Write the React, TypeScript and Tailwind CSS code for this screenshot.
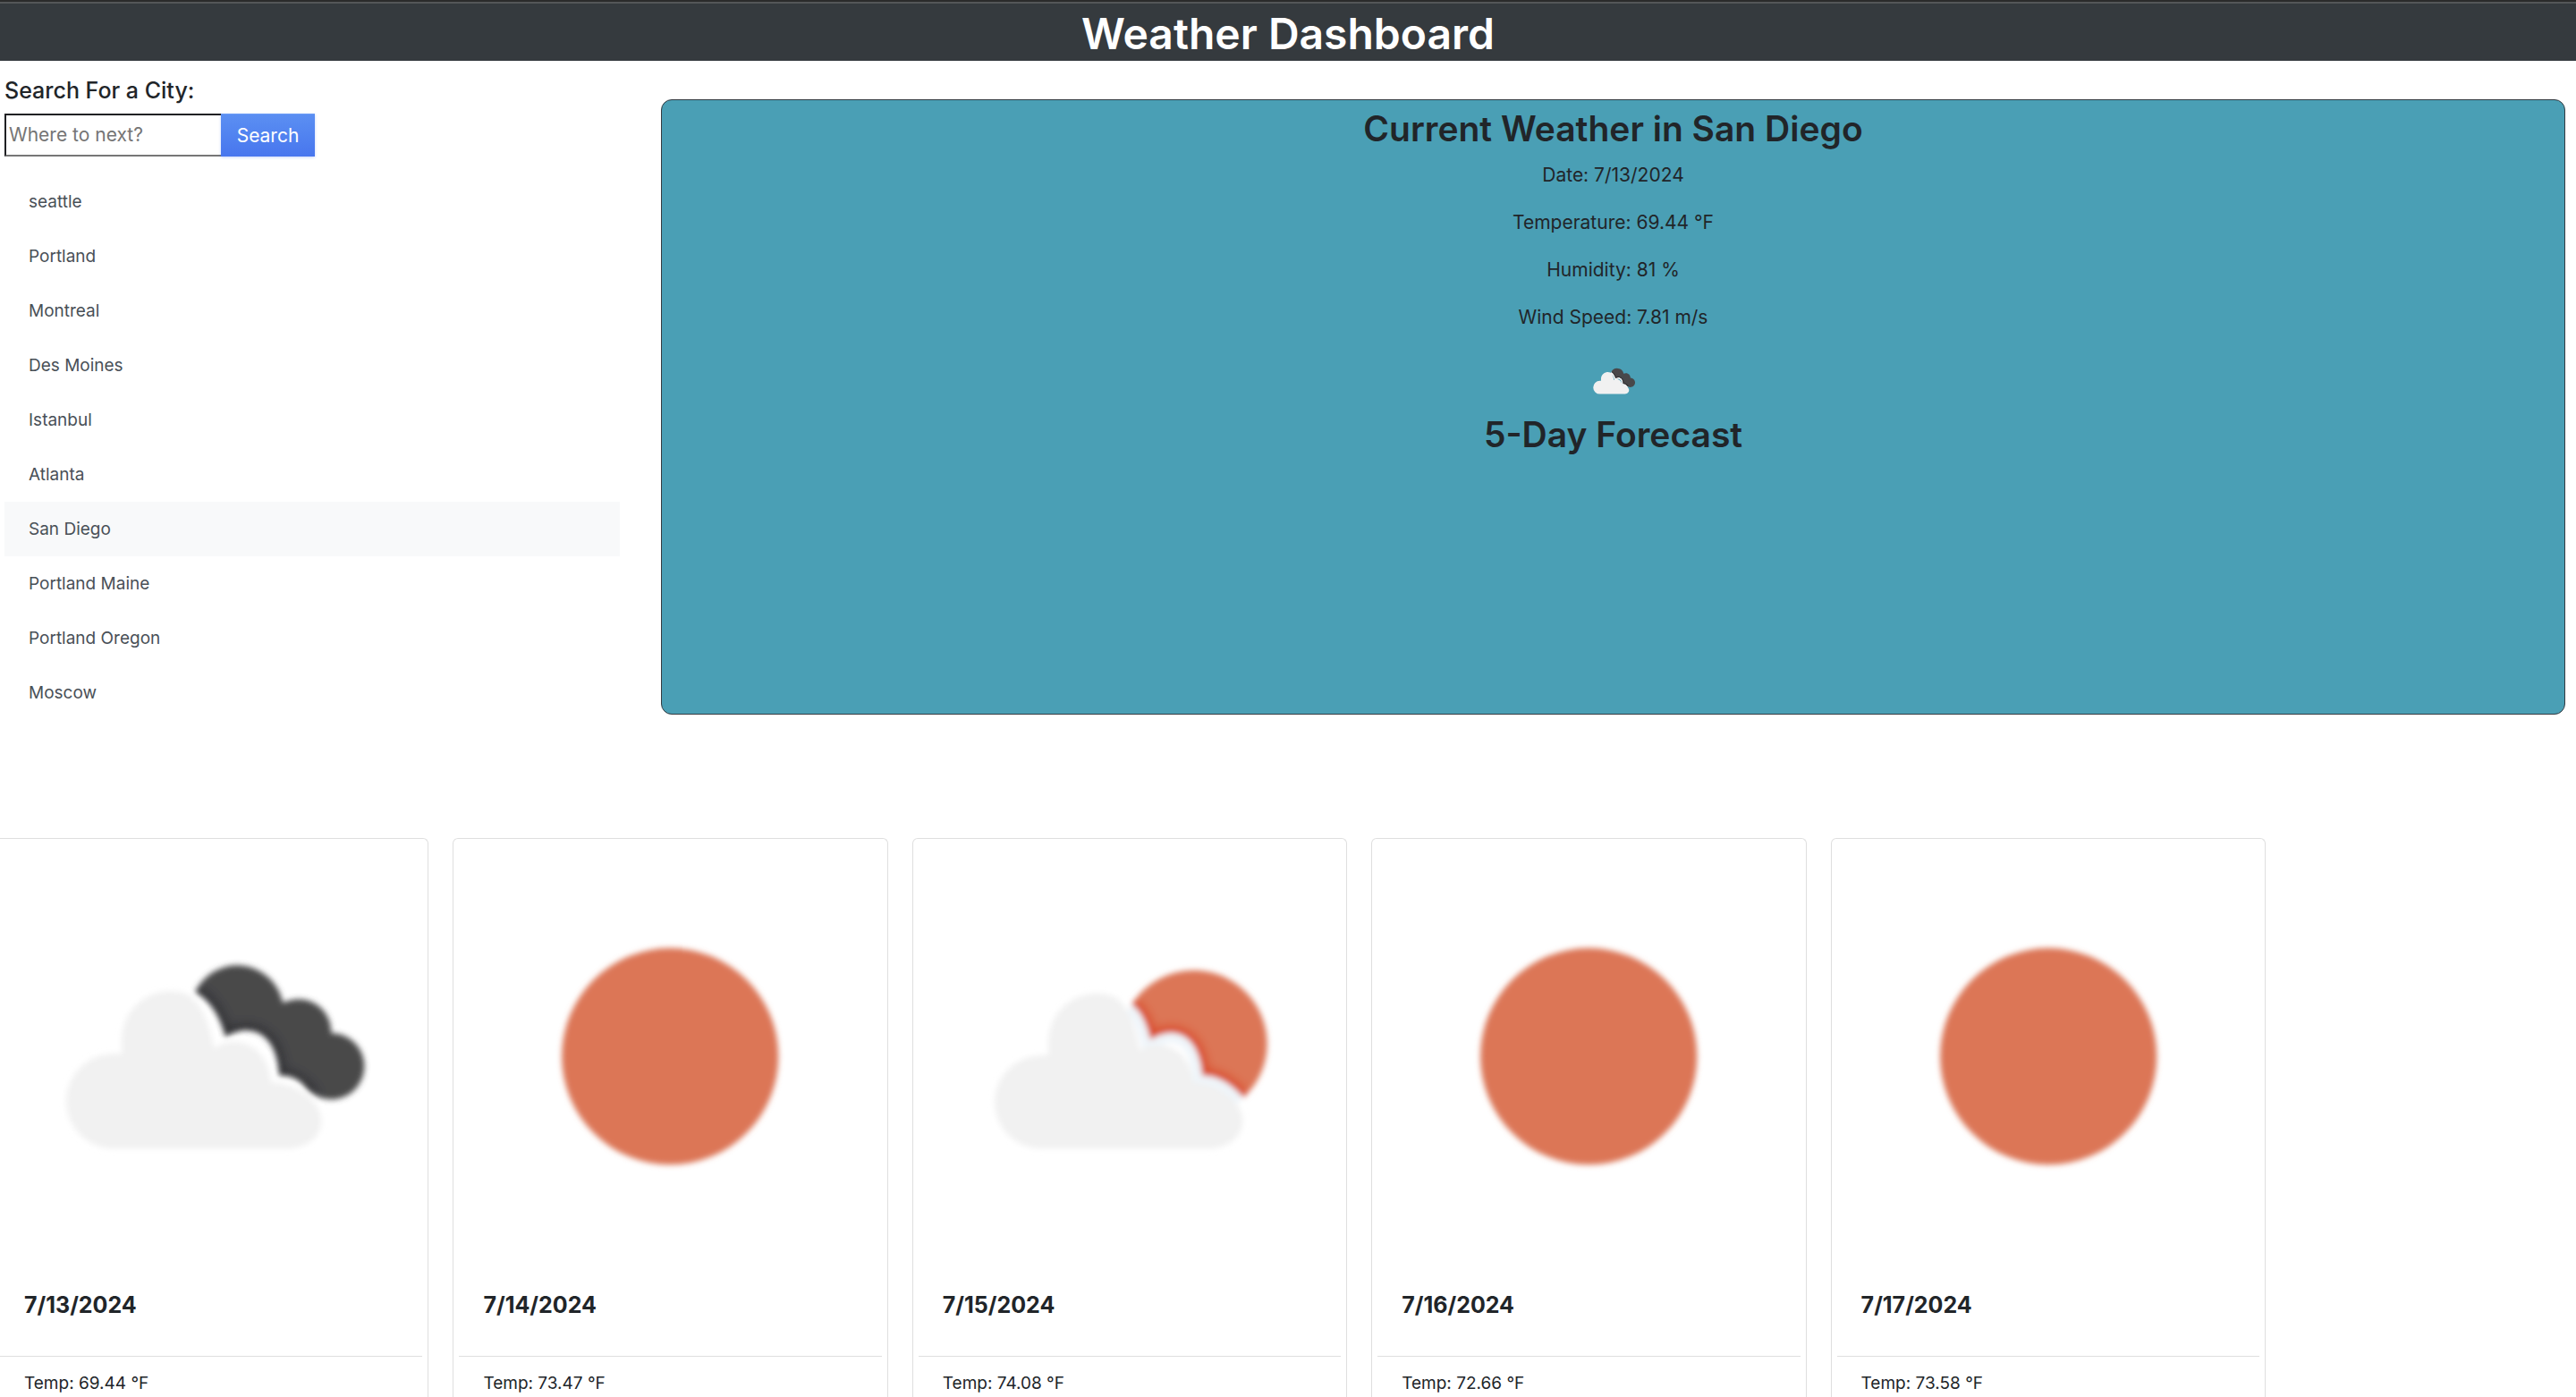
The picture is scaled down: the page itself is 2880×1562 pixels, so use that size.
import { useId, useState } from "react";

type Sky = "clouds" | "clear" | "partly";

const cities = [
  "seattle",
  "Portland",
  "Montreal",
  "Des Moines",
  "Istanbul",
  "Atlanta",
  "San Diego",
  "Portland Maine",
  "Portland Oregon",
  "Moscow",
];

const forecast: { date: string; temp: string; sky: Sky }[] = [
  { date: "7/13/2024", temp: "69.44", sky: "clouds" },
  { date: "7/14/2024", temp: "73.47", sky: "clear" },
  { date: "7/15/2024", temp: "74.08", sky: "partly" },
  { date: "7/16/2024", temp: "72.66", sky: "clear" },
  { date: "7/17/2024", temp: "73.58", sky: "clear" },
];

const conditions = ["Date: 7/13/2024", "Temperature: 69.44 °F", "Humidity: 81 %", "Wind Speed: 7.81 m/s"];

const CLOUD =
  "M133 346 A53 53 0 0 1 133 240 Q138 240 142 240 L142 222 A54 54 0 0 1 216 174 Q237 188 245 234 A38 38 0 0 1 299 243 Q306 252 309 272 C334 272 365 292 365 315 C365 334 347 346 326 346 Z";
const CLOUD_PARTLY =
  "M143 346 A52 52 0 0 1 143 242 Q147 241 151 241 L151 224 A54 54 0 0 1 226 177 Q245 190 253 236 A37 37 0 0 1 303 245 Q310 254 313 272 C338 272 368 292 368 315 C368 334 350 346 330 346 Z";
const DARK_EDGE = "M224 171 Q248 184 258 221 C282 206 315 212 318 264 Q339 264 356 287";
const DARK =
  "M224 171 Q248 184 258 221 C282 206 315 212 318 264 Q337 264 347 277 A37 37 0 1 0 376 217 C377 192 352 170 322 183 A52 52 0 0 0 224 171 Z";
const SUN_EDGE = "M244 185 Q258 194 265 224 C290 208 319 216 323 264 Q347 264 369 289";
const SUN = SUN_EDGE + " A82 82 0 1 0 244 185 Z";

function WeatherIcon({ sky, soft, label, className }: { sky: Sky; soft?: boolean; label: string; className: string }) {
  const id = useId();
  const filter = soft ? `url(#${id}-soft)` : undefined;
  return (
    <svg viewBox="0 0 484 484" role="img" aria-label={label} className={className}>
      <defs>
        <filter id={`${id}-soft`} x="-5%" y="-5%" width="110%" height="110%">
          <feGaussianBlur stdDeviation="3" />
        </filter>
        <filter id={`${id}-edge`} x="-20%" y="-20%" width="140%" height="140%">
          <feGaussianBlur stdDeviation="4" />
        </filter>
        <clipPath id={`${id}-clip`}>
          <path d={sky === "partly" ? SUN : DARK} />
        </clipPath>
      </defs>
      {sky === "clear" && <circle cx="242" cy="243" r="121" fill="#dc7656" filter={filter} />}
      {sky === "clouds" && (
        <g filter={filter}>
          {!soft && <path d={DARK_EDGE} fill="none" stroke="#f7f7f7" strokeWidth="22" />}
          <path d={DARK} fill="#48484a" />
          <g clipPath={`url(#${id}-clip)`}>
            <path d={DARK_EDGE} fill="none" stroke="#303335" strokeWidth="14" filter={`url(#${id}-edge)`} />
          </g>
          <path d={CLOUD} fill="#f1f1f1" />
        </g>
      )}
      {sky === "partly" && (
        <g filter={filter}>
          <path d={SUN_EDGE} fill="none" stroke="#eff5fa" strokeWidth="22" />
          <path d={SUN} fill="#dc7656" />
          <g clipPath={`url(#${id}-clip)`}>
            <path d={SUN_EDGE} fill="none" stroke="#d9482b" strokeWidth="14" filter={`url(#${id}-edge)`} />
          </g>
          <path d={CLOUD_PARTLY} fill="#f1f1f1" />
        </g>
      )}
    </svg>
  );
}

function SearchPanel() {
  const [query, setQuery] = useState("");
  const [selected, setSelected] = useState("San Diego");
  return (
    <aside className="pt-[18px] pl-[5px]">
      <form onSubmit={(e) => e.preventDefault()}>
        <label htmlFor="city" className="mb-[11px] block text-[25px] leading-[30px] font-medium">
          Search For a City:
        </label>
        <div className="flex h-12">
          <input
            id="city"
            type="text"
            value={query}
            onChange={(e) => setQuery(e.target.value)}
            placeholder="Where to next?"
            className="w-[242px] border-y-2 border-l-2 border-t-[#202124] border-b-[#767676] border-l-[#202124] bg-white pl-[3px] text-[21px] outline-none placeholder:text-[#757575]"
          />
          <button
            type="submit"
            className="w-[105px] border-t border-[#6c9cf5] bg-linear-to-b from-[#5b8ff2] to-[#4876ee] text-[21px] text-white shadow-[0_1px_3px_rgba(72,118,238,0.3)]"
          >
            Search
          </button>
        </div>
      </form>
      <ul className="mt-5">
        {cities.map((city) => (
          <li key={city}>
            <button
              type="button"
              onClick={() => setSelected(city)}
              className={
                "block w-full px-[27px] text-left text-[19px] leading-[61px] text-[#495057] " +
                (city === selected ? "bg-[#f8f9fa]" : "bg-white")
              }
            >
              {city}
            </button>
          </li>
        ))}
      </ul>
    </aside>
  );
}

function CurrentWeather() {
  return (
    <section className="mt-[43px] min-h-[688px] self-start rounded-xl border border-[#343a40] bg-[#4a9fb5] pt-2 text-center">
      <h2 className="mb-[13px] text-[39px] leading-[47px] font-semibold">Current Weather in San Diego</h2>
      {conditions.map((line) => (
        <p key={line} className="mb-[21px] text-[21px] leading-8">
          {line}
        </p>
      ))}
      <WeatherIcon sky="clouds" label="Broken clouds" className="mx-auto block w-[68px]" />
      <h2 className="mt-0.5 text-[39px] leading-[47px] font-semibold">5-Day Forecast</h2>
    </section>
  );
}

export default function App() {
  return (
    <div className="flex min-h-screen flex-col overflow-x-hidden bg-white font-['Inter',sans-serif] text-[#212529]">
      <header className="border-t-2 border-[#2b2b2b] bg-[#353a3e]">
        <div className="border-t-2 border-[#545658] pt-1">
          <h1 className="text-center text-5xl leading-[60px] font-semibold text-white">Weather Dashboard</h1>
        </div>
      </header>
      <main className="flex grow flex-col">
        <div className="grid grid-cols-[693fr_2129fr] gap-[46px] pr-3">
          <SearchPanel />
          <CurrentWeather />
        </div>
        <section aria-label="5-Day Forecast" className="mt-[132px] mr-[347px] -ml-[7px] grid grow grid-cols-5 gap-[27px]">
          {forecast.map((day) => (
            <article key={day.date} className="rounded-t-md border border-b-0 border-[#dfdfdf]">
              <WeatherIcon soft sky={day.sky} label={day.sky} className="block w-full" />
              <h3 className="mt-[22px] mb-[42px] px-[33px] text-[25px] leading-[30px] font-bold">{day.date}</h3>
              <div className="mx-1.5 border-t border-[#dfdfdf] px-[27px] pt-4">
                <p className="text-[19px] leading-7">Temp: {day.temp} °F</p>
              </div>
            </article>
          ))}
        </section>
      </main>
    </div>
  );
}
